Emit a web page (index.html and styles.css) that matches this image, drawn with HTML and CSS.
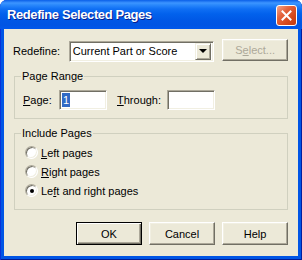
FILE: index.html
```html
<!DOCTYPE html>
<html lang="en">
<head>
  <meta charset="UTF-8">
  <title>Redefine Selected Pages</title>
  <link rel="stylesheet" href="styles.css">
</head>
<body>
  <div class="window">
    <div class="titlebar">
      <span class="title">Redefine Selected Pages</span>
      <button class="close" aria-label="Close">
        <svg width="11" height="11" viewBox="0 0 11 11">
          <path d="M1.5 1.5 L9.5 9.5 M9.5 1.5 L1.5 9.5" stroke="#fff" stroke-width="2" stroke-linecap="square" fill="none"/>
        </svg>
      </button>
    </div>

    <div class="client">
      <div class="top-row">
        <label class="top-label">Redefine:</label>
        <div class="combo">
          <span class="combo-text">Current Part or Score</span>
          <span class="combo-arrow"><span class="tri"></span></span>
        </div>
        <button class="btn btn-select" disabled>S<u>e</u>lect...</button>
      </div>

      <fieldset class="group group-range">
        <legend>Page Range</legend>
        <div class="range">
          <label class="lbl-page"><u>P</u>age:</label>
          <div class="field"><span class="sel">1</span></div>
          <label class="lbl-through"><u>T</u>hrough:</label>
          <div class="field"></div>
        </div>
      </fieldset>

      <fieldset class="group group-include">
        <legend>Include Pages</legend>
        <div class="radios">
          <div class="radio-row"><span class="radio"></span><span><u>L</u>eft pages</span></div>
          <div class="radio-row"><span class="radio"></span><span><u>R</u>ight pages</span></div>
          <div class="radio-row"><span class="radio checked"></span><span>Le<u>f</u>t and right pages</span></div>
        </div>
      </fieldset>

      <div class="actions">
        <button class="btn btn-default">OK</button>
        <button class="btn">Cancel</button>
        <button class="btn">Help</button>
      </div>
    </div>
  </div>
</body>
</html>
```

FILE: styles.css
```css
body {
  margin: 0;
  background: #fff;
  font-family: "Liberation Sans", Arial, sans-serif;
  font-size: 11px;
  color: #000;
}

.window {
  width: 302px;
  height: 260px;
  box-sizing: border-box;
  display: flex;
  flex-direction: column;
  border-radius: 7px 7px 0 0;
  background: #0055e5;
  box-shadow: inset 1px 0 #0831d9, inset -1px 0 #001ea0, inset 0 -1px #001b94;
  overflow: hidden;
}

.titlebar {
  height: 29px;
  flex-shrink: 0;
  display: flex;
  align-items: center;
  padding: 0 5px 0 7px;
  background: linear-gradient(to bottom, #0a5fe8 0, #3d95ff 3px, #2a88fb 5px, #0f6ff4 9px, #0261ec 14px, #0058e6 20px, #0055e3 25px, #0058ec 29px);
}

.title {
  flex: 1;
  color: #fff;
  font-weight: bold;
  font-size: 13px;
  letter-spacing: -0.4px;
  text-shadow: 1px 1px #0a1e8c;
}

.close {
  width: 21px;
  height: 21px;
  padding: 0;
  margin-top: 1px;
  border: 1px solid #fff;
  border-radius: 3px;
  background: linear-gradient(135deg, #f4a58c 0%, #e4643e 35%, #d4481c 70%, #c23a10 100%);
  display: flex;
  align-items: center;
  justify-content: center;
}

.client {
  flex: 1;
  margin: 0 4px 4px;
  background: #ece9d8;
  display: flex;
  flex-direction: column;
}

.top-row {
  display: flex;
  align-items: center;
  height: 22px;
  padding: 11px 10px 0 9px;
}

.top-label {
  width: 56px;
}

.combo {
  width: 146px;
  height: 21px;
  box-sizing: border-box;
  display: flex;
  align-items: center;
  background: #fff;
  border: 1px solid;
  border-color: #aca899 #fff #fff #aca899;
  box-shadow: inset 1px 1px #716f64, inset -1px -1px #f1efe2;
  padding: 2px;
  margin-right: 8px;
}

.combo-text {
  flex: 1;
  padding-left: 1px;
}

.combo-arrow {
  width: 16px;
  height: 17px;
  box-sizing: border-box;
  background: #ece9d8;
  border: 1px solid;
  border-color: #f1efe2 #716f64 #716f64 #f1efe2;
  box-shadow: inset 1px 1px #fff, inset -1px -1px #aca899;
  display: flex;
  align-items: center;
  justify-content: center;
}

.tri {
  width: 0;
  height: 0;
  border-left: 4px solid transparent;
  border-right: 4px solid transparent;
  border-top: 4px solid #000;
}

.btn {
  width: 66px;
  height: 23px;
  box-sizing: border-box;
  padding: 0;
  font: inherit;
  color: #000;
  background: #ece9d8;
  border: 1px solid;
  border-color: #fff #716f64 #716f64 #fff;
  box-shadow: inset -1px -1px #aca899, inset 1px 1px #f1efe2;
}

.btn-select {
  height: 22px;
  color: #aca899;
  margin-top: -2px;
}

.btn-default {
  border: 1px solid #000;
  box-shadow: inset 1px 1px #fff, inset -1px -1px #716f64, inset -2px -2px #aca899;
}

.group {
  margin: 7px 10px 0;
  border: 1px solid #d0d0bf;
  min-width: 0;
}

.group legend {
  line-height: 14px;
  padding: 0 1px;
  margin-left: -2px;
}

.group-range {
  padding: 7px 8px 8px;
}

.group-include {
  padding: 6px 8px 12px;
}

.range {
  display: flex;
  align-items: center;
}

.lbl-page {
  width: 36px;
}

.lbl-through {
  width: 50px;
  margin-left: 10px;
}

.field {
  width: 48px;
  height: 20px;
  box-sizing: border-box;
  background: #fff;
  border: 1px solid;
  border-color: #aca899 #fff #fff #aca899;
  box-shadow: inset 1px 1px #716f64, inset -1px -1px #f1efe2;
  padding: 2px 0 0 2px;
}

.sel {
  display: inline-block;
  background: #316ac5;
  color: #fff;
  line-height: 14px;
  padding: 0 1px;
}

.radios {
  display: flex;
  flex-direction: column;
  gap: 6px;
}

.radio-row {
  display: flex;
  align-items: center;
  height: 13px;
  gap: 3px;
  padding-left: 2px;
}

.radio {
  width: 13px;
  height: 13px;
  box-sizing: border-box;
  border-radius: 50%;
  background: #fff;
  border: 1px solid;
  border-color: #aca899 #fff #fff #aca899;
  box-shadow: inset 1px 1px #716f64, inset -1px -1px #f1efe2;
  display: flex;
  align-items: center;
  justify-content: center;
}

.radio.checked::after {
  content: "";
  width: 4px;
  height: 4px;
  border-radius: 50%;
  background: #000;
}

.actions {
  display: flex;
  justify-content: flex-end;
  gap: 7px;
  padding: 12px 10px 0;
}
```
